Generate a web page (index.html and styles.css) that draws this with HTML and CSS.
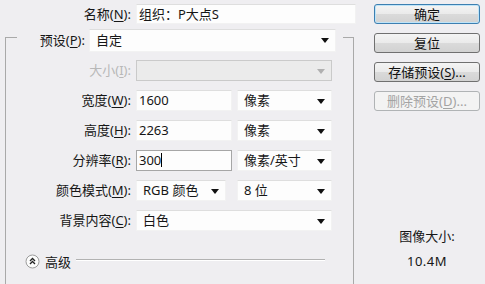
FILE: index.html
```html
<!DOCTYPE html>
<html lang="zh-CN">
<head>
    <meta charset="UTF-8">
    <title>新建</title>
    <link rel="stylesheet" href="styles.css">
</head>
<body>
    <div class="dialog">
        <div class="main">
            <div class="name-row">
                <label class="label">名称(<u>N</u>):</label>
                <div class="field name-field">组织：P大点S</div>
            </div>

            <fieldset class="group">
                <legend class="preset">
                    <label class="label preset-label">预设(<u>P</u>):</label>
                    <div class="select preset-select">自定<span class="arrow"></span></div>
                </legend>

                <div class="row">
                    <label class="label disabled">大小(<u>I</u>):</label>
                    <div class="select wide off"><span class="arrow"></span></div>
                </div>
                <div class="row">
                    <label class="label">宽度(<u>W</u>):</label>
                    <div class="field value">1600</div>
                    <div class="select unit">像素<span class="arrow"></span></div>
                </div>
                <div class="row">
                    <label class="label">高度(<u>H</u>):</label>
                    <div class="field value">2263</div>
                    <div class="select unit">像素<span class="arrow"></span></div>
                </div>
                <div class="row">
                    <label class="label">分辨率(<u>R</u>):</label>
                    <div class="field value focused">300<span class="caret"></span></div>
                    <div class="select unit">像素/英寸<span class="arrow"></span></div>
                </div>
                <div class="row">
                    <label class="label">颜色模式(<u>M</u>):</label>
                    <div class="select mode">RGB 颜色<span class="arrow"></span></div>
                    <div class="select unit bits">8 位<span class="arrow"></span></div>
                </div>
                <div class="row">
                    <label class="label">背景内容(<u>C</u>):</label>
                    <div class="select wide">白色<span class="arrow"></span></div>
                </div>

                <div class="advanced">
                    <svg class="toggle" width="15" height="15" viewBox="0 0 15 15">
                        <circle cx="7.5" cy="7.5" r="6.5" fill="#fcfcfc" stroke="#9c9c9c"/>
                        <path d="M5 7 L7.5 4.5 L10 7" fill="none" stroke="#222" stroke-width="1.3"/>
                        <path d="M5 10 L7.5 7.5 L10 10" fill="none" stroke="#222" stroke-width="1.3"/>
                    </svg>
                    <span>高级</span>
                    <span class="rule"></span>
                </div>
            </fieldset>
        </div>

        <div class="side">
            <button class="btn default">确定</button>
            <button class="btn">复位</button>
            <button class="btn">存储预设(<u>S</u>)...</button>
            <button class="btn" disabled>删除预设(<u>D</u>)...</button>

            <div class="info">
                <div>图像大小:</div>
                <div class="size">10.4M</div>
            </div>
        </div>
    </div>
</body>
</html>
```

FILE: styles.css
```css
body {
    margin: 0;
    background: #efeef1;
    font-family: "Noto Sans", "Noto Sans CJK SC", sans-serif;
    font-size: 13px;
    color: #161616;
}
u {
    text-decoration: underline;
    text-underline-offset: 2px;
}
.dialog {
    display: flex;
    padding-top: 4px;
}
.main {
    width: 356px;
}
.label {
    text-align: right;
    white-space: nowrap;
    line-height: 20px;
}
.label.disabled {
    color: #b8b8b8;
}
.name-row {
    display: flex;
    gap: 5px;
}
.name-row .label {
    width: 131px;
}
.field, .select {
    box-sizing: border-box;
    height: 21px;
    line-height: 19px;
    background: #fdfdfd;
    border: 1px solid #f2f2f2;
    border-top-color: #dedede;
    white-space: nowrap;
}
.field {
    padding-left: 2px;
}
.name-field {
    width: 220px;
    height: 20px;
}
.select {
    position: relative;
    padding-left: 6px;
}
.arrow {
    position: absolute;
    right: 6px;
    top: 8px;
    border-left: 4px solid transparent;
    border-right: 4px solid transparent;
    border-top: 5px solid #111;
}
.group {
    box-sizing: border-box;
    width: 349px;
    margin: 5px 0 0 5px;
    padding: 0 0 20px 11px;
    border: 1px solid #a9a9a9;
    border-bottom: none;
    min-width: 0;
}
.preset {
    display: flex;
    gap: 4px;
    height: 16px;
    padding: 0 7px 0 0;
}
.preset-label {
    width: 68px;
    line-height: 23px;
}
.preset-select {
    width: 247px;
    height: 23px;
    line-height: 21px;
}
.row {
    display: flex;
    gap: 5px;
    margin-left: -11px;
    margin-top: 9px;
}
.preset + .row {
    margin-top: 15px;
}
.row .label {
    width: 125px;
}
.value {
    width: 96px;
}
.unit {
    width: 95px;
}
.wide {
    width: 196px;
}
.mode {
    width: 90px;
}
.bits {
    margin-left: 6px;
}
.off {
    background: #ebebeb;
    border: 1px solid #cacaca;
}
.off .arrow {
    border-top-color: #b0b0b0;
}
.focused {
    border: 1px solid #a6a6a6;
}
.caret {
    display: inline-block;
    width: 1px;
    height: 14px;
    background: #000;
    vertical-align: -2px;
}
.advanced {
    display: flex;
    align-items: center;
    gap: 5px;
    margin: 21px 0 0 8px;
    height: 18px;
}
.toggle {
    flex: none;
}
.rule {
    flex: none;
    width: 249px;
    height: 1px;
    margin-top: -3px;
    background: #b2b2b2;
    box-shadow: 0 1px 0 #fff;
}
.side {
    display: flex;
    flex-direction: column;
    gap: 9px;
    width: 106px;
    margin-left: 18px;
}
.btn {
    height: 20px;
    padding: 0;
    font: inherit;
    color: #111;
    line-height: 17px;
    border: 1px solid #707070;
    border-radius: 3px;
    background: linear-gradient(#f4f4f4, #eaeaea 50%, #dadada 51%, #d2d2d2);
}
.btn.default {
    border-color: #3c7fb1;
    box-shadow: inset 0 0 0 1px #bfe4f8;
}
.btn:disabled {
    color: #a3a3a3;
    border-color: #b0b3b5;
    background: #f3f3f3;
}
.info {
    margin-top: 104px;
    text-align: center;
    line-height: 25px;
}
.size {
    letter-spacing: 0.5px;
}
```
